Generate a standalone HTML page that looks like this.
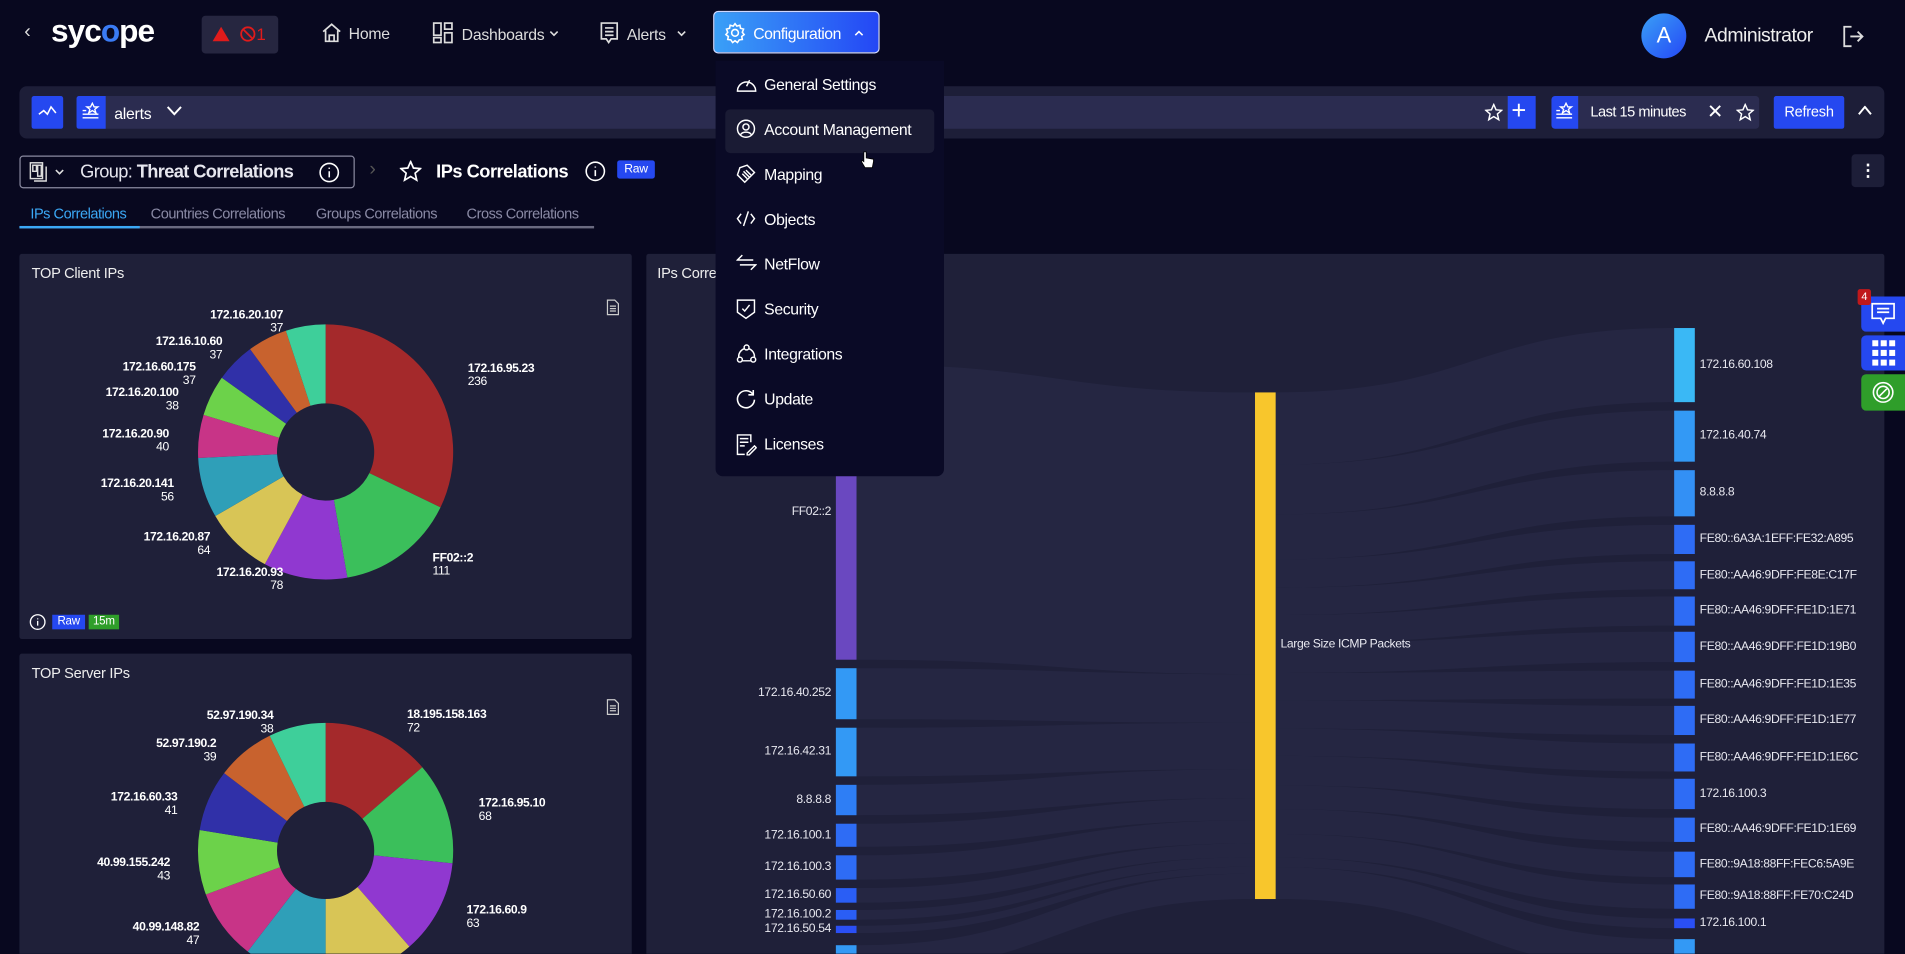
<!DOCTYPE html>
<html><head><meta charset="utf-8">
<style>
*{box-sizing:border-box;margin:0;padding:0}
html,body{width:1905px;height:954px;overflow:hidden;background:#08081f}
#w{position:absolute;left:0;top:0;width:1568px;height:785px;transform:scale(1.21492);transform-origin:0 0;font-family:"Liberation Sans",sans-serif;color:#fff;background:#08081f;overflow:hidden;letter-spacing:-0.2px}
.a{position:absolute;white-space:nowrap}
.t13{font-size:13px}
.lbl{position:absolute;font-size:10px;line-height:10.5px;color:#fff;font-family:"Liberation Sans",sans-serif;letter-spacing:-0.3px}
.lbl b{display:block}
.r{text-align:right}
.mi{position:absolute;left:606px;font-size:13px;color:#fff;height:20px;line-height:20px;letter-spacing:-0.3px}
.mi svg{position:absolute;left:0;top:1px}
.mi span{position:absolute;left:23px;white-space:nowrap}
.sl{position:absolute;font-size:10px;color:#e8e8f0;font-family:"Liberation Sans",sans-serif;white-space:nowrap;letter-spacing:-0.3px}
</style></head><body><div id="w">

<div class="a" style="left:20px;top:18px;font-size:16px;color:#ddd">‹</div>
<div class="a" style="left:42px;top:10px;font-size:26px;font-weight:bold;letter-spacing:-0.8px">syc<span style="color:#3a7bf5">o</span>pe</div>
<div class="a" style="left:166px;top:13px;width:63px;height:31px;background:#262640;border-radius:3px"></div>
<svg class="a" style="left:174px;top:21px" width="16" height="14"><path d="M8 1L15 13H1Z" fill="#e01b1b"/></svg>
<svg class="a" style="left:197px;top:21px" width="14" height="14"><circle cx="7" cy="7" r="5.5" fill="none" stroke="#e01b1b" stroke-width="1.5"/><path d="M3 3L11 11" stroke="#e01b1b" stroke-width="1.5"/></svg>
<div class="a" style="left:211px;top:20px;font-size:14px;color:#e01b1b">1</div>

<svg class="a" style="left:264px;top:18px" width="18" height="17" fill="none" stroke="#ddd" stroke-width="1.4"><path d="M2 8L9 2L16 8M4 7V16H14V7M7 16V11H11V16"/></svg>
<div class="a t13" style="left:287px;top:20px;color:#ddd">Home</div>
<svg class="a" style="left:356px;top:18px" width="17" height="18" fill="none" stroke="#ddd" stroke-width="1.4"><rect x="1" y="1" width="6" height="10"/><rect x="10" y="1" width="6" height="5"/><rect x="10" y="9" width="6" height="8"/><rect x="1" y="13" width="6" height="4"/></svg>
<div class="a t13" style="left:380px;top:21px;color:#ddd">Dashboards</div>
<svg class="a" style="left:452px;top:25px" width="8" height="6" fill="none" stroke="#ddd" stroke-width="1.3"><path d="M1 1L4 4L7 1"/></svg>
<svg class="a" style="left:493px;top:18px" width="17" height="19" fill="none" stroke="#ddd" stroke-width="1.4"><path d="M2 1H15V14H10L8 17L6 14H2Z M5 5H12M5 8H12M5 11H12"/></svg>
<div class="a t13" style="left:516px;top:21px;color:#ddd">Alerts</div>
<svg class="a" style="left:557px;top:25px" width="8" height="6" fill="none" stroke="#ddd" stroke-width="1.3"><path d="M1 1L4 4L7 1"/></svg>

<div class="a" style="left:587px;top:9px;width:137px;height:35px;border-radius:4px;background:linear-gradient(90deg,#3aa0f7,#2447f5);border:1px solid #cfd8ff"></div>
<svg class="a" style="left:596px;top:18px" width="18" height="18" fill="none" stroke="#fff" stroke-width="1.3"><circle cx="9" cy="9" r="2.8"/><path d="M9 1.5L10.5 3.5L13 2.8L13.5 5.3L16 6L15 8.5L16.5 10.5L14.5 12L15 14.5L12.5 14.8L11 17L9 15.5L7 17L5.5 14.8L3 14.5L3.5 12L1.5 10.5L3 8.5L2 6L4.5 5.3L5 2.8L7.5 3.5Z"/></svg>
<div class="a t13" style="left:620px;top:20px;letter-spacing:-0.4px">Configuration</div>
<svg class="a" style="left:703px;top:24px" width="8" height="6" fill="none" stroke="#fff" stroke-width="1.3"><path d="M1 5L4 2L7 5"/></svg>

<div class="a" style="left:1351px;top:11px;width:37px;height:37px;border-radius:50%;background:linear-gradient(135deg,#3aa0f7,#2447f5);text-align:center;line-height:37px;font-size:18px">A</div>
<div class="a" style="left:1403px;top:21px;font-size:16px;color:#eee;letter-spacing:-0.4px">Administrator</div>
<svg class="a" style="left:1516px;top:20px" width="19" height="20" fill="none" stroke="#ddd" stroke-width="1.5"><path d="M8 2H2V18H8M7 10H17M13 6L17 10L13 14"/></svg>

<div class="a" style="left:16px;top:71px;width:1535px;height:43px;background:#1d1e38;border-radius:6px"></div>
<div class="a" style="left:63px;top:79px;width:1201px;height:27px;background:#2b2c50;border-radius:3px"></div>
<div class="a" style="left:26px;top:79px;width:26px;height:27px;background:#2548f0;border-radius:2px"></div>
<svg class="a" style="left:31px;top:85px" width="16" height="14" fill="none" stroke="#fff" stroke-width="1.3"><path d="M1 9L5 6L8 9L11 3L15 8"/></svg>
<div class="a" style="left:63px;top:79px;width:24px;height:27px;background:#2548f0;border-radius:2px 0 0 2px"></div>
<svg class="a" style="left:67px;top:84px" width="16" height="16" fill="none" stroke="#fff" stroke-width="1.1"><path d="M9 1L10.5 4H13.5L11 6L12 9L9 7L6 9L7 6L4.5 4H7.5Z M1 7H4M1 10H14M1 13H14"/></svg>
<div class="a t13" style="left:94px;top:86px">alerts</div>
<svg class="a" style="left:137px;top:87px" width="13" height="9" fill="none" stroke="#fff" stroke-width="1.6"><path d="M1 1L6.5 7L12 1"/></svg>
<svg class="a" style="left:1222px;top:85px" width="15" height="15" fill="none" stroke="#fff" stroke-width="1.2"><path d="M7.5 1L9.4 5.4L14 5.8L10.5 8.8L11.6 13.5L7.5 11L3.4 13.5L4.5 8.8L1 5.8L5.6 5.4Z"/></svg>
<div class="a" style="left:1241px;top:79px;width:23px;height:27px;background:#2548f0"></div>
<div class="a" style="left:1244px;top:80px;font-size:21px;line-height:24px">+</div>
<div class="a" style="left:1277px;top:79px;width:171px;height:27px;background:#2b2c50;border-radius:3px"></div>
<div class="a" style="left:1277px;top:79px;width:22px;height:27px;background:#2548f0;border-radius:3px 0 0 3px"></div>
<svg class="a" style="left:1280px;top:84px" width="16" height="16" fill="none" stroke="#fff" stroke-width="1.1"><path d="M9 1L10.5 4H13.5L11 6L12 9L9 7L6 9L7 6L4.5 4H7.5Z M1 7H4M1 10H14M1 13H14"/></svg>
<div class="a" style="left:1309px;top:85px;font-size:12px;letter-spacing:-0.4px">Last 15 minutes</div>
<div class="a" style="left:1405px;top:82px;font-size:16px">✕</div>
<svg class="a" style="left:1429px;top:85px" width="15" height="15" fill="none" stroke="#fff" stroke-width="1.2"><path d="M7.5 1L9.4 5.4L14 5.8L10.5 8.8L11.6 13.5L7.5 11L3.4 13.5L4.5 8.8L1 5.8L5.6 5.4Z"/></svg>
<div class="a" style="left:1460px;top:79px;width:58px;height:27px;background:#2548f0;border-radius:2px;font-size:12px;text-align:center;line-height:27px">Refresh</div>
<svg class="a" style="left:1529px;top:87px" width="12" height="9" fill="none" stroke="#fff" stroke-width="1.6"><path d="M1 7L6 1L11 7"/></svg>

<div class="a" style="left:16px;top:128px;width:276px;height:27px;border:1px solid #8a8aa0;border-radius:3px"></div>
<svg class="a" style="left:24px;top:133px" width="16" height="17" fill="none" stroke="#ddd" stroke-width="1.2"><rect x="1" y="1" width="10" height="13"/><rect x="3" y="3" width="3" height="5"/><rect x="7" y="3" width="3" height="9"/><path d="M4 16H14V4"/></svg>
<svg class="a" style="left:45px;top:139px" width="8" height="6" fill="none" stroke="#ddd" stroke-width="1.3"><path d="M1 1L4 4L7 1"/></svg>
<div class="a" style="left:66px;top:133px;font-size:15px;color:#e6e6ee;letter-spacing:-0.5px">Group: <b>Threat Correlations</b></div>
<svg class="a" style="left:262px;top:133px" width="18" height="18" fill="none" stroke="#fff" stroke-width="1.3"><circle cx="9" cy="9" r="7.5"/><path d="M9 8V13M9 5V6"/></svg>
<div class="a" style="left:304px;top:131px;font-size:16px;color:#555">›</div>
<svg class="a" style="left:329px;top:132px" width="18" height="18" fill="none" stroke="#fff" stroke-width="1.4"><path d="M9 1L11.3 6.3L17 6.8L12.7 10.5L14 16.3L9 13.3L4 16.3L5.3 10.5L1 6.8L6.7 6.3Z"/></svg>
<div class="a" style="left:359px;top:133px;font-size:15px;font-weight:bold;letter-spacing:-0.4px">IPs Correlations</div>
<svg class="a" style="left:481px;top:132px" width="18" height="18" fill="none" stroke="#fff" stroke-width="1.3"><circle cx="9" cy="9" r="7.5"/><path d="M9 8V13M9 5V6"/></svg>
<div class="a" style="left:508px;top:132px;width:31px;height:15px;background:#2548f0;border-radius:2px;font-size:10px;text-align:center;line-height:15px">Raw</div>
<div class="a" style="left:1524px;top:127px;width:27px;height:27px;background:#1d1e38;border-radius:3px;text-align:center;font-size:14px;line-height:26px;font-weight:bold">⋮</div>

<div class="a" style="left:25px;top:169px;font-size:12px;color:#3ba8f5;letter-spacing:-0.4px">IPs Correlations</div>
<div class="a" style="left:124px;top:169px;font-size:12px;color:#8a8aa5;letter-spacing:-0.4px">Countries Correlations</div>
<div class="a" style="left:260px;top:169px;font-size:12px;color:#8a8aa5;letter-spacing:-0.4px">Groups Correlations</div>
<div class="a" style="left:384px;top:169px;font-size:12px;color:#8a8aa5;letter-spacing:-0.4px">Cross Correlations</div>
<div class="a" style="left:16px;top:186px;width:473px;height:2px;background:#6a6a80"></div>
<div class="a" style="left:16px;top:186px;width:99px;height:2px;background:#3ba8f5"></div>

<div class="a" style="left:16px;top:209px;width:504px;height:317px;background:#1f2039;border-radius:2px"></div>
<div class="a" style="left:16px;top:538px;width:504px;height:260px;background:#1f2039;border-radius:2px"></div>
<div class="a" style="left:532px;top:209px;width:1019px;height:590px;background:#1f2039;border-radius:2px"></div>
<div class="a" style="left:26px;top:218px;font-size:12px;color:#eee">TOP Client IPs</div>
<div class="a" style="left:26px;top:547px;font-size:12px;color:#eee">TOP Server IPs</div>
<div class="a" style="left:541px;top:218px;font-size:12px;color:#eee">IPs Correlations</div>
<svg class="a" style="left:499px;top:246px" width="11" height="14" fill="none" stroke="#ccc" stroke-width="1"><path d="M1 1H7L10 4V13H1Z M3 6H8M3 8H8M3 10H8"/></svg>
<svg class="a" style="left:499px;top:575px" width="11" height="14" fill="none" stroke="#ccc" stroke-width="1"><path d="M1 1H7L10 4V13H1Z M3 6H8M3 8H8M3 10H8"/></svg>
<svg class="a" style="left:24px;top:505px" width="14" height="14" fill="none" stroke="#fff" stroke-width="1.1"><circle cx="7" cy="7" r="6"/><path d="M7 6V10M7 4V4.8"/></svg>
<div class="a" style="left:43px;top:506px;width:27px;height:12px;background:#2548f0;font-size:9.5px;text-align:center;line-height:12px">Raw</div>
<div class="a" style="left:73px;top:506px;width:25px;height:12px;background:#2f9e2a;font-size:9.5px;text-align:center;line-height:12px">15m</div>

<svg id="pies" class="a" style="left:0;top:0" width="1568" height="785"></svg>

<div class="lbl r" style="right:1335px;top:255px"><b>172.16.20.107</b>37</div>
<div class="lbl r" style="right:1385px;top:277px"><b>172.16.10.60</b>37</div>
<div class="lbl r" style="right:1407px;top:298px"><b>172.16.60.175</b>37</div>
<div class="lbl r" style="right:1421px;top:319px"><b>172.16.20.100</b>38</div>
<div class="lbl r" style="right:1429px;top:353px"><b>172.16.20.90</b>40</div>
<div class="lbl r" style="right:1425px;top:394px"><b>172.16.20.141</b>56</div>
<div class="lbl r" style="right:1395px;top:438px"><b>172.16.20.87</b>64</div>
<div class="lbl r" style="right:1335px;top:467px"><b>172.16.20.93</b>78</div>
<div class="lbl" style="left:385px;top:299px"><b>172.16.95.23</b>236</div>
<div class="lbl" style="left:356px;top:455px"><b>FF02::2</b>111</div>
<div class="lbl r" style="right:1343px;top:585px"><b>52.97.190.34</b>38</div>
<div class="lbl r" style="right:1390px;top:608px"><b>52.97.190.2</b>39</div>
<div class="lbl r" style="right:1422px;top:652px"><b>172.16.60.33</b>41</div>
<div class="lbl r" style="right:1428px;top:706px"><b>40.99.155.242</b>43</div>
<div class="lbl r" style="right:1404px;top:759px"><b>40.99.148.82</b>47</div>
<div class="lbl" style="left:335px;top:584px"><b>18.195.158.163</b>72</div>
<div class="lbl" style="left:394px;top:657px"><b>172.16.95.10</b>68</div>
<div class="lbl" style="left:384px;top:745px"><b>172.16.60.9</b>63</div>

<svg id="sk" class="a" style="left:0;top:0" width="1568" height="785"></svg>
<div class="sl" style="left:1054px;top:525px">Large Size ICMP Packets</div>
<div id="sklab"></div>

<div class="a" style="left:589px;top:50px;width:188px;height:342px;background:#0a0a26;border-radius:0 0 6px 6px"></div>
<div class="a" style="left:597px;top:90px;width:172px;height:36px;background:#1a1b34;border-radius:4px"></div>
<div class="mi" style="top:60px"><svg width="17" height="16" fill="none" stroke="#fff" stroke-width="1.2"><path d="M1 14A7.5 7.5 0 1 1 16 14Z M8.5 10L11 5"/></svg><span>General Settings</span></div>
<div class="mi" style="top:97px"><svg width="16" height="16" fill="none" stroke="#fff" stroke-width="1.2"><circle cx="8" cy="8" r="7"/><circle cx="8" cy="6.5" r="2.5"/><path d="M3.5 13C5 10 11 10 12.5 13"/></svg><span>Account Management</span></div>
<div class="mi" style="top:134px"><svg width="16" height="16" fill="none" stroke="#fff" stroke-width="1.2"><path d="M9 1L15 7L7 15L1 9L3 3Z M5 8L9 12M6 6L11 11M8 5L12 9"/></svg><span>Mapping</span></div>
<div class="mi" style="top:171px"><svg width="16" height="16" fill="none" stroke="#fff" stroke-width="1.2"><path d="M4 4L1 8L4 12M12 4L15 8L12 12M10 2L6 14"/></svg><span>Objects</span></div>
<div class="mi" style="top:208px"><svg width="17" height="14" fill="none" stroke="#fff" stroke-width="1.2"><path d="M5 1L1 5H14M12 13L16 9H3"/></svg><span>NetFlow</span></div>
<div class="mi" style="top:245px"><svg width="16" height="17" fill="none" stroke="#fff" stroke-width="1.2"><path d="M1 1H15V11L8 16L1 11Z M5 8L7 10L11 5"/></svg><span>Security</span></div>
<div class="mi" style="top:282px"><svg width="17" height="17" fill="none" stroke="#fff" stroke-width="1.2"><circle cx="8.5" cy="3" r="2"/><circle cx="3" cy="13" r="2"/><circle cx="14" cy="13" r="2"/><path d="M6.5 4A7 7 0 0 0 2 11M10.5 4A7 7 0 0 1 15 11M5 14H12"/></svg><span>Integrations</span></div>
<div class="mi" style="top:319px"><svg width="17" height="17" fill="none" stroke="#fff" stroke-width="1.3"><path d="M14 5A7 7 0 1 0 15 9M14 1V5H10"/></svg><span>Update</span></div>
<div class="mi" style="top:356px"><svg width="17" height="18" fill="none" stroke="#fff" stroke-width="1.2"><path d="M12 7V1H1V17H7M3 4H10M3 7H10M3 10H7M9 16L15 10L16.5 11.5L10.5 17.5H9Z"/></svg><span>Licenses</span></div>
<svg class="a" style="left:708px;top:124px" width="12" height="15"><path d="M3 1V9L1.5 8L1 9L4 14H10L11 9V7L5 6V1Z" fill="#fff" stroke="#000" stroke-width="0.7"/></svg>

<div class="a" style="left:1532px;top:244px;width:36px;height:29px;background:#2548f0;border-radius:4px 0 0 4px"></div>
<svg class="a" style="left:1540px;top:249px" width="20" height="19" fill="none" stroke="#fff" stroke-width="1.4"><path d="M1 1H19V13H12L10 17L8 13H1Z M5 5H15M5 8H15"/></svg>
<div class="a" style="left:1529px;top:238px;width:11px;height:13px;background:#c0181b;border-radius:2px;font-size:9px;text-align:center;line-height:13px">4</div>
<div class="a" style="left:1532px;top:276px;width:36px;height:29px;background:#2548f0;border-radius:4px 0 0 4px"></div>
<svg class="a" style="left:1541px;top:280px" width="19" height="21" fill="#fff"><rect x="0" y="0" width="5" height="5"/><rect x="7" y="0" width="5" height="5"/><rect x="14" y="0" width="5" height="5"/><rect x="0" y="8" width="5" height="5"/><rect x="7" y="8" width="5" height="5"/><rect x="14" y="8" width="5" height="5"/><rect x="0" y="16" width="5" height="5"/><rect x="7" y="16" width="5" height="5"/><rect x="14" y="16" width="5" height="5"/></svg>
<div class="a" style="left:1532px;top:308px;width:36px;height:30px;background:#2f9e2a;border-radius:4px 0 0 4px"></div>
<svg class="a" style="left:1540px;top:313px" width="20" height="20" fill="none" stroke="#fff" stroke-width="1.3"><circle cx="10" cy="10" r="8"/><circle cx="10" cy="10" r="5"/><path d="M7 13L13 7"/></svg>

<script>
var NS="http://www.w3.org/2000/svg";
function donut(svg,cx,cy,R,r,vals,cols){
  var tot=vals.reduce(function(a,b){return a+b},0),a0=-Math.PI/2;
  vals.forEach(function(v,i){
    var a1=a0+v/tot*2*Math.PI,l=(a1-a0)>Math.PI?1:0;
    var p=function(rad,a){return (cx+rad*Math.cos(a)).toFixed(2)+" "+(cy+rad*Math.sin(a)).toFixed(2)};
    var d="M"+p(R,a0)+"A"+R+" "+R+" 0 "+l+" 1 "+p(R,a1)+"L"+p(r,a1)+"A"+r+" "+r+" 0 "+l+" 0 "+p(r,a0)+"Z";
    var e=document.createElementNS(NS,"path");e.setAttribute("d",d);e.setAttribute("fill",cols[i]);svg.appendChild(e);
    a0=a1;
  });
}
var C=["#a4292b","#3bbf5b","#9038d0","#d8c556","#2f9fb8","#c83487","#6cd24a","#3030a8","#c8622e","#3ecf9a"];
var s=document.getElementById("pies");
donut(s,268,372,105,40,[236,111,78,64,56,40,38,37,37,37],C);
donut(s,268,700,105,40,[72,68,63,60,55,47,43,41,39,38],C);

var k=document.getElementById("sk"),lab="";
function rect(x,y,w,h,c){var e=document.createElementNS(NS,"rect");e.setAttribute("x",x);e.setAttribute("y",y);e.setAttribute("width",w);e.setAttribute("height",h);e.setAttribute("fill",c);k.appendChild(e);}
function flow(x0,y0,h0,x1,y1,h1){var e=document.createElementNS(NS,"path");var m=(x0+x1)/2;
 e.setAttribute("d","M"+x0+" "+y0+"C"+m+" "+y0+" "+m+" "+y1+" "+x1+" "+y1+"L"+x1+" "+(y1+h1)+"C"+m+" "+(y1+h1)+" "+m+" "+(y0+h0)+" "+x0+" "+(y0+h0)+"Z");
 e.setAttribute("fill","#2a2c4a");e.setAttribute("opacity","0.55");k.insertBefore(e,k.firstChild);}
var L=[["FF02::2",300,543,"#6a48c0"],["172.16.40.252",550,592,"#3399f5"],["172.16.42.31",599,639,"#3399f5"],["8.8.8.8",646,671,"#2e7ef5"],["172.16.100.1",678,697,"#2e6cf5"],["172.16.100.3",704,724,"#2e6cf5"],["172.16.50.60",731,743,"#2a5ef5"],["172.16.100.2",749,757,"#2a5ef5"],["172.16.50.54",762,768,"#2a4ff5"],["",778,800,"#3399f5"]];
var R=[["172.16.60.108",270,331,"#3ab8f5"],["172.16.40.74",338,380,"#3399f5"],["8.8.8.8",387,425,"#3390f5"],["FE80::6A3A:1EFF:FE32:A895",432,456,"#2e6cf5"],["FE80::AA46:9DFF:FE8E:C17F",462,485,"#2e6cf5"],["FE80::AA46:9DFF:FE1D:1E71",491,515,"#2e6cf5"],["FE80::AA46:9DFF:FE1D:19B0",520,545,"#2e6cf5"],["FE80::AA46:9DFF:FE1D:1E35",552,575,"#2e6cf5"],["FE80::AA46:9DFF:FE1D:1E77",581,605,"#2e6cf5"],["FE80::AA46:9DFF:FE1D:1E6C",612,635,"#2e6cf5"],["172.16.100.3",641,666,"#2e6cf5"],["FE80::AA46:9DFF:FE1D:1E69",673,693,"#2e6cf5"],["FE80::9A18:88FF:FEC6:5A9E",701,722,"#2e6cf5"],["FE80::9A18:88FF:FE70:C24D",728,748,"#2e6cf5"],["172.16.100.1",756,764,"#2a4ff5"],["",773,800,"#3399f5"]];
var mh=417,lt=0;L.forEach(function(n){lt+=n[2]-n[1]});var acc=323;
L.forEach(function(n){var h=n[2]-n[1],hh=h*mh/lt;flow(705,n[1],h,1033,acc,hh);acc+=hh;});
var rt=0;R.forEach(function(n){rt+=n[2]-n[1]});acc=323;
R.forEach(function(n){var h=n[2]-n[1],hh=h*mh/rt;flow(1050,acc,hh,1378,n[1],h);acc+=hh;});
L.forEach(function(n){rect(688,n[1],17,n[2]-n[1],n[3]);if(n[0])lab+='<div class="sl" style="right:'+(1568-684)+'px;top:'+((n[1]+n[2])/2-6)+'px">'+n[0]+'</div>';});
R.forEach(function(n){rect(1378,n[1],17,n[2]-n[1],n[3]);if(n[0])lab+='<div class="sl" style="left:1399px;top:'+((n[1]+n[2])/2-6)+'px">'+n[0]+'</div>';});
rect(1033,323,17,417,"#f8c62c");
document.getElementById("sklab").innerHTML=lab;
</script>
</div></body></html>
